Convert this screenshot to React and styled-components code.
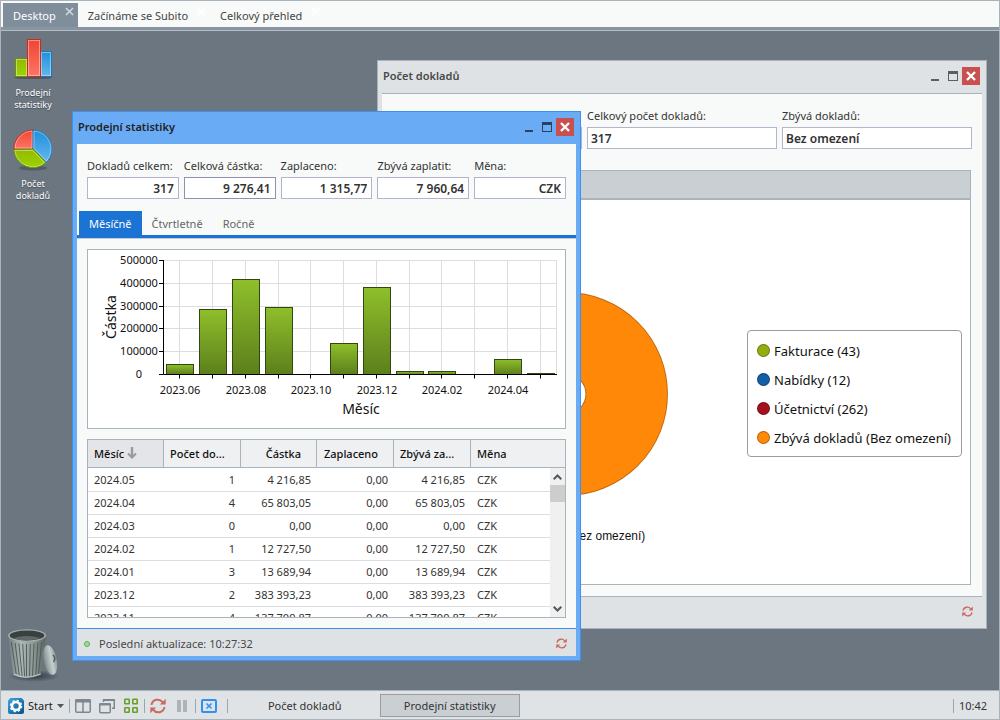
import { useId, useState } from 'react';
import styled, { createGlobalStyle } from 'styled-components';

const GlobalStyle = createGlobalStyle`
  :root {
    --desktop: #6b7681;
    --surface: #f8faf9;
    --chrome: #dfe2e5;
    --line: #a9b3bb;
    --field-line: #b3b5c8;
    --text: #333333;
    --primary: #1b73d4;
    --active: #6aabf6;
    --active-line: #3b90f0;
    --danger: #c9504f;
  }

  * {
    box-sizing: border-box;
  }

  body {
    margin: 0;
    color: var(--text);
    font-family: 'Noto Sans', 'Open Sans', sans-serif;
    font-size: 11px;
    line-height: 16px;
  }

  button,
  input {
    font: inherit;
    color: inherit;
  }

  button {
    padding: 0;
    border: 0;
    background: none;
    cursor: pointer;
  }

  svg {
    display: block;
  }
`;

const Shell = styled.div`
  display: flex;
  flex-direction: column;
  height: 100vh;
  min-height: 700px;
  overflow: hidden;
  border: 1px solid var(--line);
  background: var(--desktop);
`;

const TopTabs = styled.nav`
  display: flex;
  height: 30px;
  flex-shrink: 0;
  padding: 2px 2px 0;
  background: var(--surface);
  border-bottom: 1px solid #b4bdc5;
  box-shadow: inset 0 -3px 0 #8894a0;
`;

const TopTab = styled.button`
  display: flex;
  gap: 9px;
  height: 24px;
  padding: 2px 4px 0 10px;
  background: ${({ $active }) => ($active ? '#808d9a' : 'transparent')};
  color: ${({ $active }) => ($active ? '#fff' : '#444')};
  line-height: 22px;

  svg {
    margin-top: 2px;
    stroke: ${({ $active }) => ($active ? '#d5dade' : '#fff')};
  }
`;

const Desktop = styled.main`
  position: relative;
  display: flex;
  flex: 1;
  min-height: 0;
`;

const Shortcuts = styled.div`
  display: flex;
  flex-direction: column;
  width: 64px;
  padding-top: 7px;
`;

const Shortcut = styled.button`
  display: flex;
  flex-direction: column;
  align-items: center;
  gap: 7px;
  margin-bottom: 18px;
  color: #fff;
  font-size: 9px;
  line-height: 12px;
  text-shadow: 0 1px 1px rgba(0, 0, 0, 0.4);

  &:last-child {
    margin-top: auto;
    margin-bottom: 8px;
  }
`;

const ShortcutLabel = styled.span`
  width: 56px;
`;

const Window = styled.section`
  position: absolute;
  left: ${({ $x }) => $x}px;
  top: ${({ $y }) => $y}px;
  display: flex;
  flex-direction: column;
  width: ${({ $w }) => $w}px;
  height: ${({ $h }) => $h}px;
  padding: 0 4px 4px;
  border: 1px solid;
  border-color: ${({ $active }) =>
    $active ? 'var(--active-line)' : 'var(--line)'};
  background: ${({ $active }) => ($active ? 'var(--active)' : 'var(--chrome)')};
`;

const TitleBar = styled.header`
  display: flex;
  align-items: center;
  height: 32px;
  flex-shrink: 0;
  padding: 0 2px 2px 1px;
  color: ${({ $active }) => ($active ? '#2c4160' : '#5a5e62')};
`;

const Title = styled.h2`
  flex: 1;
  margin: 0;
  color: ${({ $active }) => ($active ? '#222' : '#484848')};
  font-size: 11px;
  font-weight: 600;
`;

const WindowButton = styled.button`
  display: grid;
  place-items: center;
  width: 18px;
  height: 18px;
  background: ${({ $close }) => ($close ? 'var(--danger)' : 'transparent')};
`;

const WindowBody = styled.div`
  display: flex;
  flex: 1;
  flex-direction: column;
  min-height: 0;
  background: var(--surface);
  border-top: ${({ $active }) => ($active ? '0' : '1px solid var(--line)')};
`;

const StatusBar = styled.footer`
  display: flex;
  align-items: center;
  gap: 9px;
  height: 28px;
  flex-shrink: 0;
  padding: 2px 9px 0 7px;
  border-top: 1px solid
    ${({ $active }) => ($active ? 'var(--active-line)' : 'var(--line)')};
  background: var(--chrome);
  color: #484848;
`;

const StatusDot = styled.span`
  width: 6px;
  height: 6px;
  border: 1px solid #5fae5c;
  border-radius: 50%;
  background: #9fdc92;
`;

const StatusButton = styled.button`
  margin-left: auto;
`;

const Fields = styled.div`
  display: flex;
  gap: 5px;
  padding: 14px 10px 0;
`;

const FieldBox = styled.div`
  display: flex;
  flex: 1;
  flex-direction: column;
  gap: 3px;
  min-width: 0;
`;

const FieldLabel = styled.label`
  white-space: nowrap;
`;

const FieldInput = styled.input`
  width: 100%;
  height: 22px;
  padding: 1px 4px 0 3px;
  border: 1px solid ${({ $focus }) => ($focus ? '#8f90ae' : 'var(--field-line)')};
  border-radius: 0;
  outline: 0;
  background: #fff;
  font-size: 12px;
  font-weight: 600;
  text-align: ${({ $align }) => $align};
`;

const PeriodTabs = styled.div`
  display: flex;
  margin-top: 12px;
  padding-left: 2px;
  border-bottom: 3px solid var(--primary);
`;

const PeriodTab = styled.button`
  height: 24px;
  padding: 2px 10px 0;
  background: ${({ $active }) => ($active ? 'var(--primary)' : 'transparent')};
  color: ${({ $active }) => ($active ? '#fff' : '#666')};
`;

const TabPanel = styled.div`
  display: flex;
  flex: 1;
  flex-direction: column;
  gap: 10px;
  min-height: 0;
  padding: 10px;
  border-top: 1px solid #c5ccd2;
`;

const ChartBox = styled.div`
  height: 180px;
  flex-shrink: 0;
  border: 1px solid var(--line);
  background: #fff;

  svg {
    width: 100%;
    height: 100%;
  }
`;

const GridBox = styled.div`
  position: relative;
  flex: 1;
  min-height: 0;
  overflow: hidden;
  border: 1px solid var(--line);
  background: #fff;
`;

const Table = styled.table`
  width: 100%;
  table-layout: fixed;
  border-collapse: separate;
  border-spacing: 0;
`;

const HeadCell = styled.th`
  height: 28px;
  padding: 0 ${({ $align }) => ($align === 'right' ? 15 : 0)}px 0 6px;
  border-bottom: 1px solid var(--line);
  border-right: 1px solid var(--line);
  background: ${({ $sorted }) => ($sorted ? '#e3e5e9' : '#eff0f2')};
  color: #111;
  font-weight: 500;
  text-align: ${({ $align }) => $align};
  white-space: nowrap;

  &:last-child {
    border-right: 0;
  }

  svg {
    display: inline-block;
    margin-left: 3px;
    vertical-align: -1px;
  }
`;

const Cell = styled.td`
  height: 23px;
  padding: 0 6px;
  border-top: 1px solid #dcdde1;
  text-align: ${({ $align }) => $align};
  white-space: nowrap;

  tr:first-child > & {
    border-top-color: transparent;
  }
`;

const Scrollbar = styled.div`
  position: absolute;
  top: 28px;
  right: 0;
  bottom: 0;
  display: flex;
  flex-direction: column;
  justify-content: space-between;
  width: 15px;
  background: #f0f0f0;
`;

const ScrollButton = styled.button`
  display: grid;
  place-items: center;
  height: 17px;
`;

const ScrollThumb = styled.div`
  height: 17px;
  margin-bottom: auto;
  background: #cdcdcd;
`;

const Report = styled.div`
  display: flex;
  flex: 1;
  flex-direction: column;
  min-height: 0;
  margin: 21px 11px 11px 10px;
  border: 1px solid var(--line);
  background: #fff;
`;

const ReportHeader = styled.div`
  height: 29px;
  flex-shrink: 0;
  border-bottom: 2px solid var(--line);
  background: #cacfd3;
`;

const ReportBody = styled.div`
  display: flex;
  flex: 1;
  align-items: center;
  gap: 8px;
  min-height: 0;
  padding: 2px 8px 0 0;

  > svg {
    flex: 1;
    min-width: 0;
    height: 100%;
  }
`;

const Legend = styled.ul`
  display: flex;
  flex-direction: column;
  gap: 9px;
  margin: 0;
  padding: 10px 10px 8px 9px;
  border: 1px solid #9c9c9c;
  border-radius: 4px;
  color: #111;
  font-size: 13px;
  line-height: 20px;
  list-style: none;
`;

const LegendItem = styled.li`
  display: flex;
  align-items: center;
  gap: 4px;
  white-space: nowrap;

  &::before {
    content: '';
    width: 11px;
    height: 11px;
    border: 1px solid rgba(0, 0, 0, 0.3);
    border-radius: 50%;
    background: ${({ $color }) => $color};
  }
`;

const Taskbar = styled.footer`
  display: flex;
  align-items: center;
  height: 29px;
  flex-shrink: 0;
  padding: 1px 12px 0 7px;
  border-top: 1px solid var(--line);
  background: #dfe3e6;
`;

const StartButton = styled.button`
  display: flex;
  align-items: center;
  gap: 4px;
  color: #222;
`;

const Separator = styled.span`
  width: 1px;
  height: 14px;
  margin: 0 5px 0 ${({ $wide }) => ($wide ? 10 : 5)}px;
  background: #9aa5ae;
`;

const ToolGroup = styled.div`
  display: flex;
  gap: 8px;
`;

const TaskList = styled.div`
  display: flex;
  flex: 1;
  gap: 5px;
  padding-left: 2px;
`;

const TaskButton = styled.button`
  width: 140px;
  height: 23px;
  border: 1px solid ${({ $active }) => ($active ? '#9a9c9e' : 'transparent')};
  background: ${({ $active }) => ($active ? '#cacfd3' : 'transparent')};
`;

const SubitoLogo = () => (
  <svg width="16" height="16" viewBox="0 0 16 16">
    <defs>
      <linearGradient id="logo" x1="0" y1="0" x2="1" y2="1">
        <stop offset="0" stopColor="#3aa5dc" />
        <stop offset="1" stopColor="#07508f" />
      </linearGradient>
    </defs>
    <path
      d="M2.500 0H13.500L16 2.500V14Q16 16 14 16H2Q0 16 0 14V2.500Z"
      fill="url(#logo)"
    />
    <circle cx="8" cy="8" r="4" fill="none" stroke="#fff" strokeWidth="2.600" />
    <circle
      cx="8"
      cy="8"
      r="5.600"
      fill="none"
      stroke="#fff"
      strokeWidth="1.400"
      strokeDasharray="2.200 2.200"
    />
  </svg>
);

const CloseGlyph = ({ size = 10, width = 2, color }) => (
  <svg width={size} height={size} viewBox="0 0 10 10" fill="none">
    <path d="M1 1L9 9M9 1L1 9" stroke={color} strokeWidth={width} />
  </svg>
);

const MinimizeIcon = () => (
  <svg width="18" height="18" fill="currentColor">
    <path d="M5 12h8v2H5z" />
  </svg>
);

const MaximizeIcon = () => (
  <svg width="18" height="18" fill="currentColor">
    <path fillRule="evenodd" d="M4 4h10v10H4zM5 7v6h8V7z" />
  </svg>
);

const RefreshIcon = ({ size }) => (
  <svg width={size} height={size} viewBox="0 0 16 16" fill="none">
    <path
      d="M1.500 6.800A6.200 6.200 0 0 1 12.600 4.200M14.500 9.200A6.200 6.200 0 0 1 3.400 11.800"
      stroke="#cb6a5c"
      strokeWidth="2"
    />
    <path d="M15.700 0.800V6.600H9.900ZM0.300 15.200V9.400H6.100Z" fill="#cb6a5c" />
  </svg>
);

const CaretIcon = () => (
  <svg width="7" height="4">
    <path d="M0 0H7L3.500 4Z" fill="#555" />
  </svg>
);

const TileIcon = () => (
  <svg width="16" height="16" fill="none" stroke="#7e8791" strokeWidth="1.500">
    <rect x="0.750" y="1.750" width="14.500" height="12.500" rx="1" />
    <path d="M8 2V14" />
    <path d="M0 3H16" strokeWidth="3" />
  </svg>
);

const CascadeIcon = () => (
  <svg width="16" height="16" fill="none" stroke="#7e8791" strokeWidth="1.500">
    <path d="M4.500 4V1.750H15.250V10.250H13" />
    <rect x="0.750" y="5.750" width="10.500" height="9" rx="1" />
    <path d="M0 6.500H12M4 2H16" strokeWidth="2" />
  </svg>
);

const GridIcon = () => (
  <svg width="16" height="16" fill="none" stroke="#6a9f2c" strokeWidth="1.600">
    <rect x="1.800" y="1.300" width="4.400" height="4.400" rx="0.500" />
    <rect x="9.800" y="1.300" width="4.400" height="4.400" rx="0.500" />
    <rect x="1.800" y="9.800" width="4.400" height="4.400" rx="0.500" />
    <rect x="9.800" y="9.800" width="4.400" height="4.400" rx="0.500" />
  </svg>
);

const PauseIcon = () => (
  <svg width="16" height="16" fill="#aeb3b8">
    <path d="M3 2h4v12H3zM9 2h4v12H9z" />
  </svg>
);

const CloseAllIcon = () => (
  <svg width="16" height="16" fill="none" stroke="#2f92f0" strokeWidth="2">
    <rect x="1" y="2" width="14" height="12" rx="1" />
    <path d="M5.500 5.500L10.500 10.500M10.500 5.500L5.500 10.500" strokeWidth="1.600" />
  </svg>
);

const BarsShortcutIcon = () => (
  <svg width="40" height="42" viewBox="0 0 40 42">
    <defs>
      <linearGradient id="green" x1="0" y1="0" x2="0" y2="1">
        <stop offset="0" stopColor="#93b800" />
        <stop offset="1" stopColor="#9cd500" />
      </linearGradient>
      <linearGradient id="red" x1="0" y1="0" x2="0" y2="1">
        <stop offset="0" stopColor="#ee4632" />
        <stop offset="1" stopColor="#ff7466" />
      </linearGradient>
      <linearGradient id="blue" x1="0" y1="0" x2="0" y2="1">
        <stop offset="0" stopColor="#1d90de" />
        <stop offset="1" stopColor="#66b7ea" />
      </linearGradient>
    </defs>
    <ellipse cx="20" cy="39.500" rx="19" ry="1.600" fill="#39424b" opacity="0.600" />
    <rect x="2.500" y="20.500" width="12" height="18" fill="url(#green)" stroke="#6f9200" />
    <rect x="27.500" y="13.500" width="11" height="25" fill="url(#blue)" stroke="#1678bd" />
    <rect x="14.500" y="1.500" width="13" height="37" fill="url(#red)" stroke="#cb2b1d" />
    <g fill="none" stroke="#fff" strokeOpacity="0.400">
      <rect x="3.500" y="21.500" width="10" height="16" />
      <rect x="15.500" y="2.500" width="11" height="35" />
      <rect x="28.500" y="14.500" width="9" height="23" />
    </g>
  </svg>
);

const PieShortcutIcon = () => (
  <svg width="40" height="42" viewBox="0 0 40 42">
    <ellipse cx="20" cy="39" rx="14" ry="2.500" fill="#39424b" opacity="0.500" />
    <path d="M20 20L0.800 20A19.200 19.200 0 0 1 20 1Z" fill="url(#red)" stroke="#cb2b1d" />
    <path d="M20 20V1A19.200 19.200 0 0 1 33.500 33.500Z" fill="url(#blue)" stroke="#1678bd" />
    <path d="M20 20L33 33.500A19.200 19.200 0 0 1 0.800 20.500Z" fill="url(#green)" stroke="#6f9200" />
    <g fill="none" stroke="#fff" strokeOpacity="0.400">
      <path d="M19 19H2A18 18 0 0 1 19 2Z" />
      <path d="M21 19.500V2A18 18 0 0 1 33.500 32Z" />
      <path d="M19.500 21.500L31.500 33.500A18 18 0 0 1 2 21.500Z" />
    </g>
  </svg>
);

const TrashIcon = () => (
  <svg width="52" height="54" viewBox="1 0 48 54" preserveAspectRatio="none">
    <defs>
      <linearGradient id="bin" x1="0" x2="1">
        <stop offset="0" stopColor="#6f7d7c" />
        <stop offset="0.350" stopColor="#aab8b5" />
        <stop offset="0.700" stopColor="#87948f" />
        <stop offset="1" stopColor="#56625f" />
      </linearGradient>
      <linearGradient id="lid" x1="0" x2="1">
        <stop offset="0" stopColor="#7f8f8e" />
        <stop offset="0.600" stopColor="#c3cfce" />
        <stop offset="1" stopColor="#8d9b9a" />
      </linearGradient>
      <radialGradient id="binShadow">
        <stop offset="0" stopColor="#20272d" stopOpacity="0.800" />
        <stop offset="1" stopColor="#20272d" stopOpacity="0" />
      </radialGradient>
    </defs>
    <ellipse cx="26" cy="48" rx="24" ry="6" fill="url(#binShadow)" />
    <path d="M2 8L7 47Q18 53 32 47L37 8Z" fill="url(#bin)" />
    <g fill="none" stroke="#4f5b5a" strokeWidth="0.900">
      <path d="M5 14L9.500 46M8.500 15L12.300 47.500M12 15.500L15 48.500M15.500 16L17.300 49M19 16V49M22.500 16L21.800 49M26 15.500L24.500 48.500M29.500 15L27.500 47.500M33 14L30 46.500" />
    </g>
    <path d="M7 46Q18 52 32 46" fill="none" stroke="#b9c5c2" strokeWidth="1.200" />
    <ellipse cx="19.500" cy="7.500" rx="17.500" ry="6.300" fill="#a3b0ad" />
    <ellipse cx="19.500" cy="7.500" rx="16" ry="5" fill="#39403f" />
    <path d="M7 10Q19 6 32 10Q26 12.300 19 12.300Q11 12.300 7 10Z" fill="#5f6967" />
    <ellipse cx="40" cy="32" rx="6.600" ry="15.500" fill="#6c7a79" transform="rotate(-10 40 32)" />
    <ellipse cx="41" cy="32" rx="5.800" ry="15" fill="url(#lid)" transform="rotate(-10 41 32)" />
    <path d="M43.500 27Q46.500 30 44 34" fill="none" stroke="#52605f" strokeWidth="1.500" />
  </svg>
);

const SortIcon = () => (
  <svg width="10" height="12" fill="none" stroke="#97999d">
    <path d="M5 0V10" strokeWidth="2.400" />
    <path d="M1 6.500L5 10.500L9 6.500" strokeWidth="2" />
  </svg>
);

const ChevronIcon = ({ down }) => (
  <svg width="9" height="6" fill="none" stroke="#55585c" strokeWidth="2">
    <path d={down ? 'M0.700 0.700L4.500 4.500L8.300 0.700' : 'M0.700 5.300L4.500 1.500L8.300 5.300'} />
  </svg>
);

const topTabs = ['Desktop', 'Začínáme se Subito', 'Celkový přehled'];
const periods = ['Měsíčně', 'Čtvrtletně', 'Ročně'];

const totals = [
  ['Dokladů celkem:', '317'],
  ['Celková částka:', '9 276,41'],
  ['Zaplaceno:', '1 315,77'],
  ['Zbývá zaplatit:', '7 960,64'],
  ['Měna:', 'CZK'],
];

const columns = [
  { title: 'Měsíc', head: 'left', align: 'left', width: 76 },
  { title: 'Počet do...', head: 'left', align: 'right', width: 77 },
  { title: 'Částka', head: 'right', align: 'right', width: 76 },
  { title: 'Zaplaceno', head: 'right', align: 'right', width: 77 },
  { title: 'Zbývá za...', head: 'left', align: 'right', width: 77 },
  { title: 'Měna', head: 'left', align: 'left' },
];

const rows = [
  ['2024.05', '1', '4 216,85', '0,00', '4 216,85', 'CZK'],
  ['2024.04', '4', '65 803,05', '0,00', '65 803,05', 'CZK'],
  ['2024.03', '0', '0,00', '0,00', '0,00', 'CZK'],
  ['2024.02', '1', '12 727,50', '0,00', '12 727,50', 'CZK'],
  ['2024.01', '3', '13 689,94', '0,00', '13 689,94', 'CZK'],
  ['2023.12', '2', '383 393,23', '0,00', '383 393,23', 'CZK'],
  ['2023.11', '4', '137 709,87', '0,00', '137 709,87', 'CZK'],
];

const months = [
  ['2023.06', 45000],
  ['2023.07', 286000],
  ['2023.08', 418000],
  ['2023.09', 295000],
  ['2023.10', 0],
  ['2023.11', 137710],
  ['2023.12', 383393],
  ['2024.01', 13690],
  ['2024.02', 12728],
  ['2024.03', 0],
  ['2024.04', 65803],
  ['2024.05', 4217],
];

const legend = [
  ['Fakturace (43)', '#92ae0e'],
  ['Nabídky (12)', '#115fa6'],
  ['Účetnictví (262)', '#a61120'],
  ['Zbývá dokladů (Bez omezení)', '#ff8809'],
];

function Field({ label, value, align, focus }) {
  const id = useId();

  return (
    <FieldBox>
      <FieldLabel htmlFor={id}>{label}</FieldLabel>
      <FieldInput id={id} value={value} $align={align} $focus={focus} readOnly />
    </FieldBox>
  );
}

function WindowTitle({ title, active }) {
  return (
    <TitleBar $active={active}>
      <Title $active={active}>{title}</Title>
      <WindowButton aria-label="Minimalizovat">
        <MinimizeIcon />
      </WindowButton>
      <WindowButton aria-label="Maximalizovat">
        <MaximizeIcon />
      </WindowButton>
      <WindowButton $close aria-label="Zavřít">
        <CloseGlyph color="#fff" width={2.4} />
      </WindowButton>
    </TitleBar>
  );
}

function MonthChart() {
  const left = 75.5;
  const right = 468.5;
  const base = 124.5;
  const height = 114;
  const max = 500000;
  const step = (right - left) / months.length;
  const centerOf = i => Math.floor(left + step * (i + 0.5)) + 0.5;
  const yOf = value => Math.round(base - (value / max) * height - 0.5) + 0.5;

  return (
    <svg viewBox="0 0 477 178" fontSize="11" fill="#111">
      <defs>
        <linearGradient id="bar" x1="0" y1="0" x2="0" y2="1">
          <stop offset="0" stopColor="#8fbf2b" />
          <stop offset="1" stopColor="#5c7f1c" />
        </linearGradient>
      </defs>
      {[0, 1, 2, 3, 4, 5].map(n => (
        <g key={n}>
          {n > 0 && (
            <path d={`M${left} ${yOf(n * 100000)}H${right}`} stroke="#ddd" />
          )}
          <path d={`M71 ${yOf(n * 100000)}H${left}`} stroke="#000" />
          <text x="51" y={yOf(n * 100000) + 3} textAnchor="middle">
            {n * 100000}
          </text>
        </g>
      ))}
      {months.map(([month], i) => (
        <path key={month} d={`M${centerOf(i)} 10V${base}`} stroke="#ddd" />
      ))}
      <path d={`M${right} 10V${base}`} stroke="#ddd" />
      {months.map(([month, value], i) => (
        <g key={month}>
          {value > 0 && (
            <rect
              x={centerOf(i) - 13}
              y={yOf(value)}
              width="27"
              height={base - yOf(value)}
              fill="url(#bar)"
              stroke="#314712"
            />
          )}
          <path d={`M${centerOf(i)} ${base}v4`} stroke="#000" />
          {i % 2 === 0 && (
            <text x={centerOf(i) + 0.5} y="144" textAnchor="middle">
              {month}
            </text>
          )}
        </g>
      ))}
      <path d={`M${left} 10V${base}H469`} fill="none" stroke="#000" />
      <g fontSize="14" textAnchor="middle">
        <text x="273" y="164">
          Měsíc
        </text>
        <text transform="translate(28 67) rotate(-90)">Částka</text>
      </g>
    </svg>
  );
}

function PieChart() {
  return (
    <svg viewBox="0 0 348 384">
      <circle cx="174" cy="193" r="61" fill="none" stroke="#c06a10" strokeWidth="83" />
      <circle cx="174" cy="193" r="61" fill="none" stroke="#ff8809" strokeWidth="81" />
      <text
        x="174"
        y="340"
        textAnchor="middle"
        fontFamily="'Liberation Sans', sans-serif"
        fontSize="12"
        fill="#111"
      >
        Zbývá dokladů (Bez omezení)
      </text>
    </svg>
  );
}

function DocumentsWindow() {
  return (
    <Window $x={376} $y={29} $w={610} $h={569}>
      <WindowTitle title="Počet dokladů" />
      <WindowBody>
        <Fields>
          <Field label="Licence:" value="" align="left" />
          <Field label="Celkový počet dokladů:" value="317" align="left" />
          <Field label="Zbývá dokladů:" value="Bez omezení" align="left" />
        </Fields>
        <Report>
          <ReportHeader />
          <ReportBody>
            <PieChart />
            <Legend>
              {legend.map(([name, color]) => (
                <LegendItem key={name} $color={color}>
                  {name}
                </LegendItem>
              ))}
            </Legend>
          </ReportBody>
        </Report>
      </WindowBody>
      <StatusBar>
        <StatusButton aria-label="Obnovit">
          <RefreshIcon size={11} />
        </StatusButton>
      </StatusBar>
    </Window>
  );
}

function SalesWindow() {
  const [period, setPeriod] = useState(periods[0]);

  return (
    <Window $x={71} $y={80} $w={509} $h={550} $active>
      <WindowTitle title="Prodejní statistiky" active />
      <WindowBody $active>
        <Fields>
          {totals.map(([label, value], i) => (
            <Field
              key={label}
              label={label}
              value={value}
              align="right"
              focus={i === 1}
            />
          ))}
        </Fields>
        <PeriodTabs role="tablist">
          {periods.map(name => (
            <PeriodTab
              key={name}
              role="tab"
              aria-selected={name === period}
              $active={name === period}
              onClick={() => setPeriod(name)}
            >
              {name}
            </PeriodTab>
          ))}
        </PeriodTabs>
        <TabPanel>
          <ChartBox>
            <MonthChart />
          </ChartBox>
          <GridBox>
            <Table>
              <colgroup>
                {columns.map(({ title, width }) => (
                  <col key={title} width={width} />
                ))}
              </colgroup>
              <thead>
                <tr>
                  {columns.map(({ title, head }, i) => (
                    <HeadCell key={title} $align={head} $sorted={i === 0}>
                      {title}
                      {i === 0 && <SortIcon />}
                    </HeadCell>
                  ))}
                </tr>
              </thead>
              <tbody>
                {rows.map(row => (
                  <tr key={row[0]}>
                    {row.map((value, i) => (
                      <Cell key={columns[i].title} $align={columns[i].align}>
                        {value}
                      </Cell>
                    ))}
                  </tr>
                ))}
              </tbody>
            </Table>
            <Scrollbar>
              <ScrollButton aria-label="Nahoru">
                <ChevronIcon />
              </ScrollButton>
              <ScrollThumb />
              <ScrollButton aria-label="Dolů">
                <ChevronIcon down />
              </ScrollButton>
            </Scrollbar>
          </GridBox>
        </TabPanel>
      </WindowBody>
      <StatusBar $active>
        <StatusDot />
        Poslední aktualizace: 10:27:32
        <StatusButton aria-label="Obnovit">
          <RefreshIcon size={11} />
        </StatusButton>
      </StatusBar>
    </Window>
  );
}

function App() {
  return (
    <>
      <GlobalStyle />
      <Shell>
        <TopTabs>
          {topTabs.map((name, i) => (
            <TopTab key={name} $active={i === 0}>
              {name}
              <CloseGlyph size={9} width={1.6} />
            </TopTab>
          ))}
        </TopTabs>
        <Desktop>
          <Shortcuts>
            <Shortcut>
              <BarsShortcutIcon />
              <ShortcutLabel>Prodejní statistiky</ShortcutLabel>
            </Shortcut>
            <Shortcut>
              <PieShortcutIcon />
              <ShortcutLabel>Počet dokladů</ShortcutLabel>
            </Shortcut>
            <Shortcut aria-label="Koš">
              <TrashIcon />
            </Shortcut>
          </Shortcuts>
          <DocumentsWindow />
          <SalesWindow />
        </Desktop>
        <Taskbar>
          <StartButton>
            <SubitoLogo />
            Start
            <CaretIcon />
          </StartButton>
          <Separator />
          <ToolGroup>
            <button aria-label="Vedle sebe">
              <TileIcon />
            </button>
            <button aria-label="Kaskáda">
              <CascadeIcon />
            </button>
            <button aria-label="Mřížka">
              <GridIcon />
            </button>
          </ToolGroup>
          <Separator />
          <ToolGroup>
            <button aria-label="Obnovit vše">
              <RefreshIcon size={16} />
            </button>
            <button aria-label="Pozastavit">
              <PauseIcon />
            </button>
          </ToolGroup>
          <Separator />
          <button aria-label="Zavřít vše">
            <CloseAllIcon />
          </button>
          <Separator $wide />
          <TaskList>
            <TaskButton>Počet dokladů</TaskButton>
            <TaskButton $active>Prodejní statistiky</TaskButton>
          </TaskList>
          <Separator />
          <time>10:42</time>
        </Taskbar>
      </Shell>
    </>
  );
}

export default App;
